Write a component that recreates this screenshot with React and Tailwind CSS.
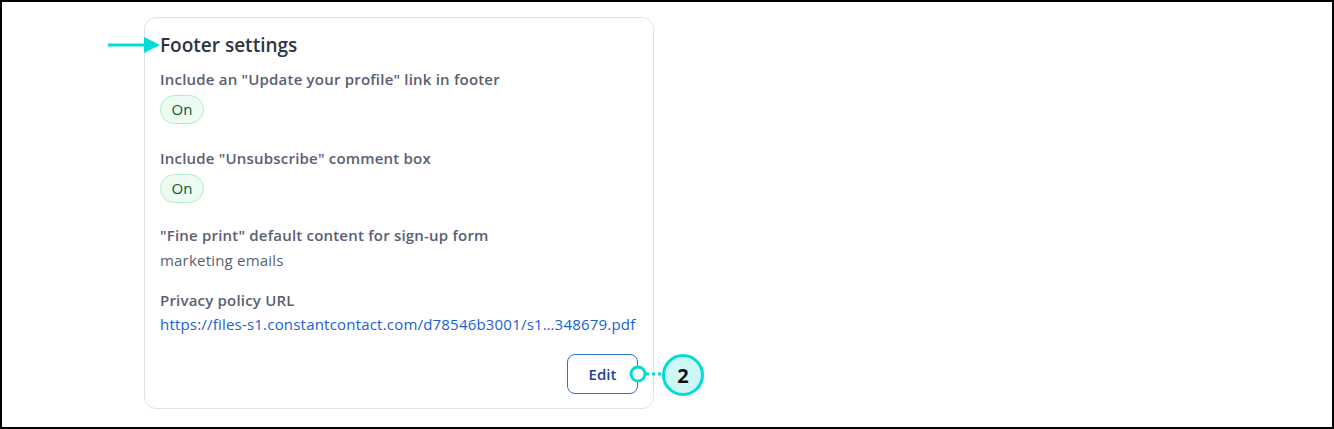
export default function App() {
  const label = "text-[15px] leading-[20px] font-semibold tracking-[0.2px] text-[#5a6072]";
  const pill =
    "inline-flex items-center justify-center w-[44px] h-[29px] rounded-full border border-[#b5eccb] bg-[#ecfcf2] text-[15px] text-[#0b5a2e] font-medium";
  return (
    <div
      className="relative w-[1334px] h-[429px] border-2 border-black bg-white overflow-hidden"
      style={{ fontFamily: "'Open Sans', 'Noto Sans', sans-serif" }}
    >
      <div className="absolute left-[142px] top-[15px] w-[510px] h-[392px] rounded-[12px] border border-[#dde2ec] bg-white px-[15px] pt-[15px] pb-[14px] flex flex-col">
        <div className="text-[19px] leading-[24px] font-semibold text-[#2e3443]">Footer settings</div>
        <div className={`${label} mt-[12px]`}>Include an "Update your profile" link in footer</div>
        <div className="mt-[6px]"><span className={pill}>On</span></div>
        <div className={`${label} mt-[24px]`}>Include "Unsubscribe" comment box</div>
        <div className="mt-[6px]"><span className={pill}>On</span></div>
        <div className={`${label} mt-[22px]`}>"Fine print" default content for sign-up form</div>
        <div className="text-[15px] leading-[20px] tracking-[0.2px] text-[#5a6072] mt-[5px]">marketing emails</div>
        <div className={`${label} mt-[20px]`}>Privacy policy URL</div>
        <div className="text-[15px] leading-[20px] tracking-[0.2px] text-[#1a5ed8] mt-[4px] whitespace-nowrap">
          https://files-s1.constantcontact.com/d78546b3001/s1…348679.pdf
        </div>
        <div className="mt-auto flex justify-end">
          <button className="w-[71px] h-[40px] rounded-[8px] border border-[#2f6fdc] text-[15px] font-semibold text-[#1c449e] bg-white">
            Edit
          </button>
        </div>
      </div>

      {/* arrow */}
      <svg className="absolute left-[106px] top-[33px]" width="54" height="20" viewBox="0 0 54 20">
        <rect x="0" y="8.5" width="38" height="3" fill="#00dcd6" />
        <polygon points="36,2 52,10 36,18" fill="#00dcd6" />
      </svg>

      {/* callout */}
      <svg className="absolute left-[624px] top-[349px]" width="84" height="48" viewBox="0 0 84 48">
        <circle cx="12" cy="23" r="7" fill="white" stroke="#00dcd6" strokeWidth="3" />
        <line x1="20" y1="23" x2="38" y2="23" stroke="#00dcd6" strokeWidth="3" strokeDasharray="3 3" />
        <circle cx="57" cy="24" r="19.5" fill="#ccf7f5" stroke="#00dcd6" strokeWidth="3" />
        <text x="57" y="31.5" textAnchor="middle" fontSize="20" fontWeight="bold" fill="#111" fontFamily="'Open Sans', sans-serif">2</text>
      </svg>
    </div>
  );
}
